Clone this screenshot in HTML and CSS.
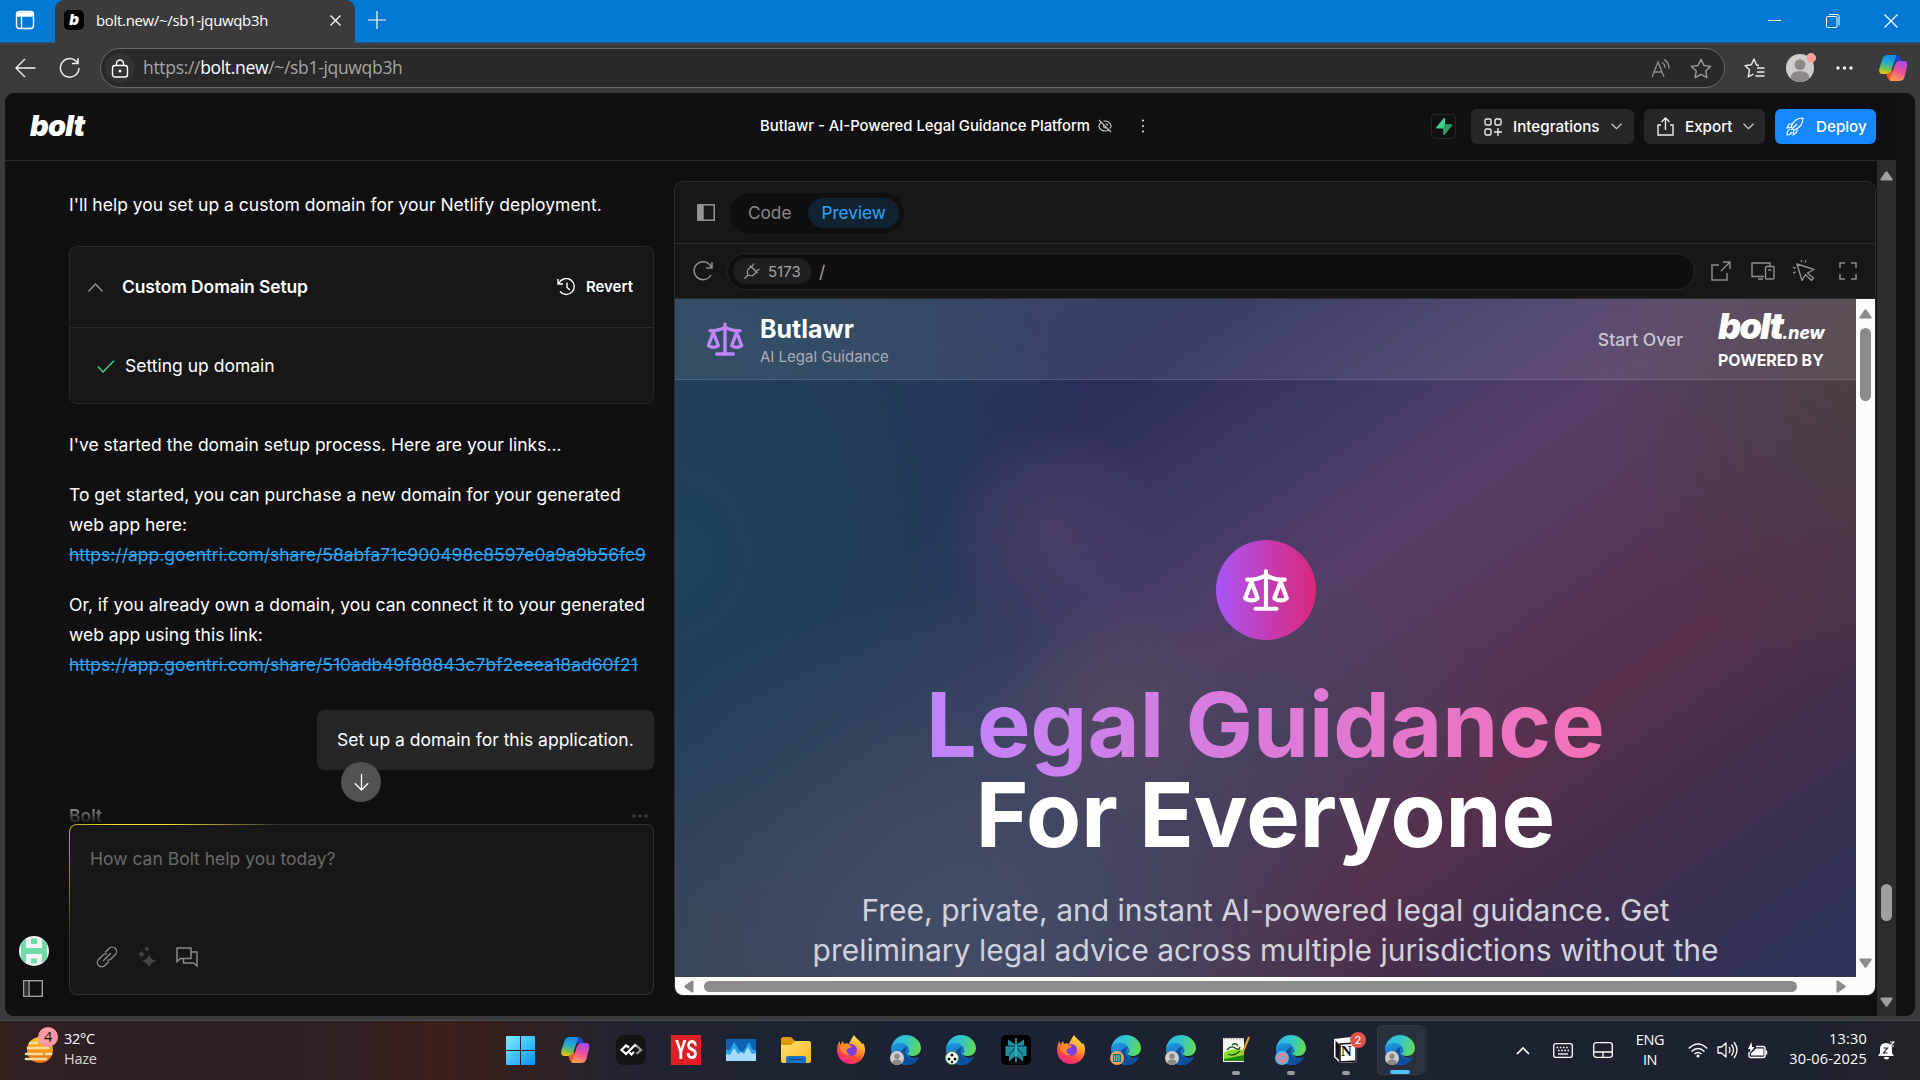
FILE: index.html
```html
<!DOCTYPE html>
<html lang="en">
<head>
    <meta charset="UTF-8">
    <meta name="viewport" content="width=device-width, initial-scale=1.0">
    <title>bolt.new/~/sb1-jquwqb3h</title>
    <link rel="stylesheet" href="styles.css">
</head>
<body>
    <!-- Shared icons -->
    <svg class="defs" width="0" height="0">
        <defs>
            <linearGradient id="edgeGreen" x1="0" y1="0.3" x2="1" y2="0.5">
                <stop offset="0" stop-color="#2fb4ee"/>
                <stop offset="0.5" stop-color="#35c6c8"/>
                <stop offset="1" stop-color="#62db53"/>
            </linearGradient>
            <linearGradient id="edgeBlue" x1="0" y1="0" x2="0.4" y2="1">
                <stop offset="0" stop-color="#1f9be6"/>
                <stop offset="1" stop-color="#1160ae"/>
            </linearGradient>
            <linearGradient id="foxBody" x1="0.8" y1="0" x2="0.3" y2="1">
                <stop offset="0" stop-color="#fff14a"/>
                <stop offset="0.4" stop-color="#ffa02c"/>
                <stop offset="0.7" stop-color="#ff4a3c"/>
                <stop offset="1" stop-color="#f0208c"/>
            </linearGradient>
            <linearGradient id="copA" x1="0.3" y1="0" x2="0.1" y2="1">
                <stop offset="0" stop-color="#1a8de8"/>
                <stop offset="0.4" stop-color="#24b0c8"/>
                <stop offset="0.7" stop-color="#7fc04c"/>
                <stop offset="1" stop-color="#ffc800"/>
            </linearGradient>
            <linearGradient id="copB" x1="0.7" y1="0" x2="0.4" y2="1">
                <stop offset="0" stop-color="#a04cf0"/>
                <stop offset="0.5" stop-color="#ee5098"/>
                <stop offset="1" stop-color="#ff9a54"/>
            </linearGradient>
            <linearGradient id="winG" x1="0" y1="0" x2="1" y2="1">
                <stop offset="0" stop-color="#7ff0ff"/>
                <stop offset="1" stop-color="#0a92f8"/>
            </linearGradient>
            <linearGradient id="folderG" x1="0" y1="0" x2="1" y2="1">
                <stop offset="0" stop-color="#ffe07a"/>
                <stop offset="1" stop-color="#f9b817"/>
            </linearGradient>
            <linearGradient id="sunG" x1="0" y1="0" x2="0" y2="1">
                <stop offset="0" stop-color="#ffc928"/>
                <stop offset="1" stop-color="#f06a0c"/>
            </linearGradient>
        </defs>
        <symbol id="edge" viewBox="0 0 30 30">
            <path fill="url(#edgeBlue)" d="M0 14c0-4 6-7 11-6 5 0 8 4 8 7-1 1-2 2-2 4 1 4 6 5 11 3-3 5-7 8-13 8C7 30 0 23 0 14z"/>
            <path fill="#0d4f9c" d="M10 17c1-3 4-5 7-5-2 2-3 4-2 7 2 5 8 6 13 3-2 5-7 8-11 8-5-1-9-7-7-13z"/>
            <path fill="url(#edgeGreen)" d="M0 14C1 6 7 0 15 0c8 0 15 6 15 13 0 5-4 8-8 8-3 0-6-1-5-3 1-1 2-2 1-4-1-4-5-6-9-6-4 0-8 2-9 6z"/>
        </symbol>
        <symbol id="person" viewBox="0 0 14 14">
            <circle cx="7" cy="7" r="7" fill="#cfcdcb"/>
            <circle cx="7" cy="5.3" r="2.7" fill="#8b8886"/>
            <path fill="#8b8886" d="M2.400 12.300c0-3 2-3.700 4.600-3.700s4.600.7 4.600 3.700A7 7 0 0 1 7 14a7 7 0 0 1-4.600-1.700z"/>
        </symbol>
        <symbol id="firefox" viewBox="0 0 30 30">
            <path fill="url(#foxBody)" d="M15 29C7 29 1 23 1 15c0-4 1-7 3-9v4l3-4 1 3c2-1 3-1 5 0 1-3 3-6 5-9 2 4 6 5 8 9l1-1c2 3 2 5 2 7 0 8-6 14-14 14z"/>
            <circle cx="15" cy="15" r="6" fill="#7b3fe0"/>
            <path fill="#ff8a26" d="M4 12c3-3 6-3 8-2l4 1c-1 2-3 2-5 3-1 2 0 5 4 6-6 1-11-3-11-8z"/>
        </symbol>
        <symbol id="copilot" viewBox="0 0 28 26">
            <path fill="#1c48c4" d="M14 0h3c3 0 4 2 5 6h-6l-4 4z"/>
            <path fill="url(#copA)" d="M8 0h7c2 0 2 1 1 3l-4 12c-1 3-2 4-5 4H3c-3 0-4-3-3-6L3 4c1-3 3-4 5-4z"/>
            <path fill="#f25a2c" d="M6 19c3 0 5-1 6-4l1 0-1 11c-3 0-4-3-5-7z"/>
            <path fill="url(#copB)" d="M20 26h-8c-2 0-2-1-1-3l4-12c1-3 2-5 5-5h5c3 0 3 3 2.500 6L25 22c-1 3-3 4-5 4z"/>
        </symbol>
        <symbol id="scales" viewBox="0 0 24 24">
            <g fill="none" stroke="currentColor" stroke-width="2" stroke-linecap="round" stroke-linejoin="round">
                <path d="m16 16 3-8 3 8c-.87.65-1.920 1-3 1s-2.130-.35-3-1Z"/>
                <path d="m2 16 3-8 3 8c-.87.65-1.920 1-3 1s-2.130-.35-3-1Z"/>
                <path d="M7 21h10M12 3v18M3 7h2c2 0 5-1 7-2 2 1 5 2 7 2h2"/>
            </g>
        </symbol>
    </svg>

    <div class="titlebar">
        <svg class="workspaces" width="20" height="20" viewBox="0 0 20 20" fill="none" stroke="#fff" stroke-width="1.400"><rect x="1.500" y="1.500" width="17" height="17" rx="3"/><path d="M2 3h16v3H2z" fill="#fff"/><path d="M6.500 6v12"/></svg>
        <div class="tab">
            <span class="favicon">b</span>
            <span class="tab-title">bolt.new/~/sb1-jquwqb3h</span>
            <svg width="11" height="11" viewBox="0 0 11 11" stroke="#fff" stroke-width="1.300"><path d="M.5.5l10 10M10.500.5l-10 10"/></svg>
        </div>
        <svg class="new-tab" width="18" height="18" viewBox="0 0 18 18" stroke="#fff" stroke-width="1.200"><path d="M9 0v18M0 9h18"/></svg>
        <div class="window-buttons">
            <svg width="14" height="14" viewBox="0 0 14 14" stroke="#fff"><path d="M0 6.500h13"/></svg>
            <svg width="14" height="14" viewBox="0 0 14 14" fill="none" stroke="#fff"><rect x=".5" y="2.500" width="10.500" height="11" rx="1"/><path d="M3 .5h8q2 0 2 2v9"/></svg>
            <svg width="14" height="14" viewBox="0 0 14 14" stroke="#fff" stroke-width="1.200"><path d="M.5.5l13 13M13.500.5l-13 13"/></svg>
        </div>
    </div>

    <div class="toolbar">
        <svg width="21" height="20" viewBox="0 0 21 20" fill="none" stroke="#f0f0f0" stroke-width="1.400"><path d="M20.500 10H1M10 1l-9 9 9 9"/></svg>
        <svg class="reload" width="22" height="22" viewBox="0 0 22 22" fill="none" stroke="#f0f0f0" stroke-width="1.500"><path d="M20 11a9.300 9.300 0 1 1-3-7l2 2M19 1v5.500h-6"/></svg>
        <div class="address">
            <span class="lock"><svg width="18" height="19" viewBox="0 0 18 19" fill="none" stroke="#fff" stroke-width="1.400"><rect x="1.500" y="6.500" width="15" height="11.500" rx="2.500"/><path d="M5.500 6V4.500a3.500 3.500 0 0 1 7 0V6"/><circle cx="9" cy="12" r=".8" fill="#fff"/></svg></span>
            <span class="url">https://<b>bolt.new</b>/~/sb1-jquwqb3h</span>
            <svg class="aloud" width="20" height="19" viewBox="0 0 20 19" fill="none" stroke="#8f8f8f" stroke-width="1.300"><path d="M1 18L7 3l6 15M3 13h8M11 3.500q3 1.500 3 5.500M13 .7q5 2.500 5 9"/></svg>
            <svg width="22" height="21" viewBox="0 0 24 23" fill="none" stroke="#9a9a9a" stroke-width="1.500" stroke-linejoin="round"><path d="M12 1.500l3.200 6.700 7.300 1-5.300 5.100 1.300 7.300L12 18l-6.500 3.600 1.300-7.300L1.500 9.200l7.300-1z"/></svg>
        </div>
        <svg class="favs" width="21" height="20" viewBox="0 0 21 20" fill="none" stroke="#f0f0f0" stroke-width="1.400" stroke-linejoin="round"><path d="M15 7.500l-2.500-.5L10 1 7.300 6.800 1 7.600l4.500 4.400L4.300 18.800 9.500 16"/><path d="M13 10h7.500M13 14h7.500M11.500 18h9"/></svg>
        <div class="profile"><svg width="28" height="28"><use href="#person"/></svg><i></i></div>
        <svg class="more" width="17" height="4" viewBox="0 0 17 4" fill="#f0f0f0"><circle cx="2" cy="2" r="1.700"/><circle cx="8.500" cy="2" r="1.700"/><circle cx="15" cy="2" r="1.700"/></svg>
        <svg class="cop" width="29" height="26"><use href="#copilot"/></svg>
    </div>

    <div class="viewport">
        <div class="app">
            <div class="app-main">
                <header class="app-header">
                    <div class="logo">bolt</div>
                    <div class="project">
                        <span>Butlawr - AI-Powered Legal Guidance Platform</span>
                        <svg width="14" height="14" viewBox="0 0 14 14" fill="none" stroke="#c8c8c8" stroke-width="1.100"><path d="M1 1l12 12M3.500 3Q1.500 4.600.8 7q1.700 5 6.200 5 2 0 3.600-1M5.500 2.100Q6.200 2 7 2q4.500 0 6.200 5-.5 1.400-1.400 2.500M5.500 6.500A1.800 1.800 0 0 0 8 8.700M7.500 4.700a2 2 0 0 1 2 2"/></svg>
                        <svg class="dots" width="4" height="14" viewBox="0 0 4 14" fill="#ddd"><circle cx="2" cy="1.500" r="1.100"/><circle cx="2" cy="7" r="1.100"/><circle cx="2" cy="12.500" r="1.100"/></svg>
                    </div>
                    <div class="actions">
                        <div class="supabase"><svg width="16" height="17" viewBox="0 0 16 17"><path fill="#3ecf8e" d="M9 .3v6.200h6.200c.8 0 .9.700.5 1.200L8.700 16.500C8 17 7.500 16.800 7.500 16V10.500H1C0 10.500-.1 9.700.3 9.200L7.600.2C8-.2 9-.1 9 .3z"/><path fill="#2a9d68" d="M9 6.500h6.200c.8 0 .9.700.5 1.200L8.700 16.500C8 17 7.500 16.800 7.500 16V10.500z"/></svg></div>
                        <button class="btn integrations">
                            <svg width="18" height="18" viewBox="0 0 18 18" fill="none" stroke="#eee" stroke-width="1.400"><rect x="1" y="1" width="6" height="6" rx="1.500"/><rect x="11" y="1" width="6" height="6" rx="1.500"/><rect x="1" y="11" width="6" height="6" rx="1.500"/><path d="M14 10v8M10 14h8"/></svg>
                            Integrations
                            <svg class="chev" width="11" height="7" viewBox="0 0 11 7" fill="none" stroke="#ccc" stroke-width="1.300"><path d="M.5.7l5 5 5-5"/></svg>
                        </button>
                        <button class="btn export">
                            <svg width="17" height="19" viewBox="0 0 17 19" fill="none" stroke="#eee" stroke-width="1.400"><path d="M4 8H1v10h15V8h-3M8.500 13V1M4.500 5l4-4 4 4"/></svg>
                            Export
                            <svg class="chev" width="11" height="7" viewBox="0 0 11 7" fill="none" stroke="#ccc" stroke-width="1.300"><path d="M.5.7l5 5 5-5"/></svg>
                        </button>
                        <button class="btn deploy">
                            <svg width="18" height="19" viewBox="0 0 18 19" fill="none" stroke="#fff" stroke-width="1.200" stroke-linejoin="round"><path d="M5 10C7 4 11 1 17 1c0 6-3 10-9 12zM6 7H3L1 11l4-1M11 12v3l-4 3 1-5M4 12c-2 1-3 3-3 6 3 0 4-1 5-3M5 13l6-6"/></svg>
                            Deploy
                        </button>
                    </div>
                </header>

                <div class="workbench">
                    <aside class="rail">
                        <svg width="30" height="30" viewBox="0 0 30 30"><circle cx="15" cy="15" r="15" fill="#f2f2f2"/><path fill="#6edcaa" d="M2 8q2-3 5-5v9h16V3q3 2 5 5v14q-2 3-5 5v-9H7v9q-3-2-5-5zM12 2.500h6v5.500h-6zM12 22.500h6v5h-6z"/></svg>
                        <svg width="20" height="17" viewBox="0 0 20 17" fill="none" stroke="#a0a0a0" stroke-width="1.400"><rect x=".7" y=".7" width="18.600" height="15.600"/><path d="M6 1v15"/><path stroke="#333" stroke-width="3" d="M3.200 1.500v14"/></svg>
                    </aside>

                    <section class="chat">
                        <div class="messages">
                            <p>I'll help you set up a custom domain for your Netlify deployment.</p>
                            <div class="artifact">
                                <div class="artifact-head">
                                    <svg width="15" height="9" viewBox="0 0 15 9" fill="none" stroke="#999" stroke-width="1.200"><path d="M.5 8.500l7-7.500 7 7.500"/></svg>
                                    <strong>Custom Domain Setup</strong>
                                    <span class="revert">
                                        <svg width="19" height="18" viewBox="0 0 19 18" fill="none" stroke="#fff" stroke-width="1.400"><path d="M2 5A8 8 0 1 1 3 13.500M1 1v5h5M10 4.500V9.500l3 2.500"/></svg>
                                        Revert
                                    </span>
                                </div>
                                <div class="artifact-body">
                                    <svg width="18" height="13" viewBox="0 0 18 13" fill="none" stroke="#3fd07a" stroke-width="1.500"><path d="M1 6.500l5 5.500L17 .7"/></svg>
                                    Setting up domain
                                </div>
                            </div>
                            <p>I've started the domain setup process. Here are your links...</p>
                            <p>To get started, you can purchase a new domain for your generated<br>web app here:<br><a href="#">https://app.goentri.com/share/58abfa71c900498c8597e0a9a9b56fc9</a></p>
                            <p>Or, if you already own a domain, you can connect it to your generated<br>web app using this link:<br><a href="#">https://app.goentri.com/share/510adb49f88843c7bf2eeea18ad60f21</a></p>
                            <div class="bubble">Set up a domain for this application.</div>
                            <div class="author"><span>Bolt</span><svg width="16" height="4" viewBox="0 0 16 4" fill="#3c3c3c"><circle cx="2" cy="2" r="1.800"/><circle cx="8" cy="2" r="1.800"/><circle cx="14" cy="2" r="1.800"/></svg></div>
                        </div>
                        <button class="scroll-down"><svg width="15" height="17" viewBox="0 0 15 17" fill="none" stroke="#fff" stroke-width="1.300"><path d="M7.500 0v16M.8 9.300l6.700 6.700 6.700-6.700"/></svg></button>
                        <div class="prompt">
                            <span class="placeholder">How can Bolt help you today?</span>
                            <div class="prompt-tools">
                                <svg width="22" height="22" viewBox="0 0 22 22" fill="none" stroke="#8a8a8a" stroke-width="1.400" stroke-linecap="round"><path d="M9.500 6l3.600-3.600a4.300 4.300 0 0 1 6.200 6.200L15 12.900a4.300 4.300 0 0 1-3.500 1.200M12.500 16l-3.600 3.600a4.300 4.300 0 0 1-6.200-6.200L7 9.100a4.300 4.300 0 0 1 3.500-1.200M7.500 14.500l7-7"/></svg>
                                <svg width="20" height="22" viewBox="0 0 20 22" fill="#444"><path d="M12 8q1 5.500 7.500 7Q13 16.500 12 22q-1-5.500-7.500-7Q11 13.500 12 8zM4.500 4q.5 3 4 4-3.500 1-4 4-.5-3-4-4 3.500-1 4-4zM10 0q.3 2 3 3-2.700 1-3 3-.3-2-3-3 2.700-1 3-3z"/></svg>
                                <svg width="22" height="20" viewBox="0 0 22 20" fill="none" stroke="#8a8a8a" stroke-width="1.500"><path d="M1 1h14v10.500H4.500L1 14.500zM15 5h6v14l-3.500-3H7.500v-4.500"/></svg>
                            </div>
                        </div>
                    </section>

                    <section class="panel">
                        <div class="panel-tabs">
                            <svg width="18" height="17" viewBox="0 0 18 17" fill="none" stroke="#949494" stroke-width="1.500"><rect x=".8" y=".8" width="16.400" height="15.400"/><path d="M1 1h5v15H1z" fill="#949494"/></svg>
                            <div class="switch"><span>Code</span><span class="active">Preview</span></div>
                        </div>
                        <div class="panel-address">
                            <svg width="21" height="20" viewBox="0 0 21 20" fill="none" stroke="#8f8f8f" stroke-width="1.500"><path d="M19 14a9 9 0 1 1 .5-7.500M20 1v6h-6"/></svg>
                            <div class="path">
                                <span class="port"><svg width="16" height="16" viewBox="0 0 16 16" fill="none" stroke="#a0a0a0" stroke-width="1.200"><path d="M.5 15.500l3.500-3.500M10 .5L8 3.500M15.500 6L12.500 8M6 2.500l7.500 7.500M7 3.500L4 6.500Q2.500 9 4 12q3 1.500 5.500 0l3-3"/></svg>5173</span>
                                <span class="slash">/</span>
                            </div>
                            <div class="panel-icons">
                                <svg width="20" height="20" viewBox="0 0 20 20" fill="none" stroke="#8f8f8f" stroke-width="1.400"><path d="M8 4H1v15h15v-7M12 1h7v7M19 1l-9 9"/></svg>
                                <svg class="devices" width="24" height="18" viewBox="0 0 24 18" fill="none" stroke="#8f8f8f" stroke-width="1.400"><path d="M13 14.500H1V1h18v3M7 17h5"/><rect x="14.500" y="4.500" width="8.500" height="12.500" rx="1"/><path d="M17 8h3.500"/></svg>
                                <svg class="inspect" width="22" height="22" viewBox="0 0 22 22" fill="none" stroke="#8f8f8f" stroke-width="1.400" stroke-linejoin="round"><path d="M4 4l17 5.500-6.500 3.500 6 5-2 2.500-6-6-3.500 6zM8.500 2V0M12 2.500l1-2.200M0 7.500l2.500.5M0 13l2.500-1"/></svg>
                                <svg class="expand" width="18" height="18" viewBox="0 0 18 18" fill="none" stroke="#8f8f8f" stroke-width="1.500"><path d="M1 6V1h5M12 1h5v5M17 12v5h-5M6 17H1v-5"/></svg>
                            </div>
                        </div>
                        <div class="preview">
                            <div class="site">
                                <nav class="site-nav">
                                    <svg class="brand-icon" width="40" height="40"><use href="#scales"/></svg>
                                    <div class="brand">
                                        <div class="brand-name">Butlawr</div>
                                        <div class="brand-sub">AI Legal Guidance</div>
                                    </div>
                                    <span class="start-over">Start Over</span>
                                    <div class="powered">
                                        <div class="powered-logo"><b>bolt</b><i>.new</i></div>
                                        <div class="powered-by">POWERED BY</div>
                                    </div>
                                </nav>
                                <main class="hero">
                                    <div class="hero-icon"><svg width="50" height="50"><use href="#scales"/></svg></div>
                                    <h1><span>Legal Guidance</span><br>For Everyone</h1>
                                    <p>Free, private, and instant AI-powered legal guidance. Get<br>preliminary legal advice across multiple jurisdictions without the</p>
                                </main>
                            </div>
                            <div class="vbar">
                                <svg width="13" height="10" viewBox="0 0 13 10"><path fill="#8b8b8b" d="M5.500.8q1-1 2 0L12.500 8q.5 1.500-1 1.500h-10Q0 9.500.5 8z"/></svg>
                                <div class="thumb"></div>
                                <svg width="13" height="10" viewBox="0 0 13 10"><path fill="#8b8b8b" d="M5.500 9.200q1 1 2 0L12.500 2q.5-1.500-1-1.500h-10Q0 .5.500 2z"/></svg>
                            </div>
                            <div class="hbar">
                                <svg width="10" height="13" viewBox="0 0 10 13"><path fill="#8b8b8b" d="M.8 5.500q-1 1 0 2L8 12.500q1.500.5 1.500-1v-10Q9.500 0 8 .5z"/></svg>
                                <div class="thumb"></div>
                                <svg width="10" height="13" viewBox="0 0 10 13"><path fill="#8b8b8b" d="M9.200 5.500q1 1 0 2L2 12.500Q.5 13 .5 11.500v-10Q.5 0 2 .5z"/></svg>
                            </div>
                        </div>
                    </section>

                    <div class="page-scroll">
                        <svg width="13" height="10" viewBox="0 0 13 10"><path fill="#9f9f9f" d="M5.500.8q1-1 2 0L12.500 8q.5 1.500-1 1.500h-10Q0 9.500.5 8z"/></svg>
                        <div class="thumb"></div>
                        <svg width="13" height="10" viewBox="0 0 13 10"><path fill="#9f9f9f" d="M5.500 9.200q1 1 2 0L12.500 2q.5-1.500-1-1.500h-10Q0 .5.500 2z"/></svg>
                    </div>
                </div>
            </div>
        </div>
    </div>

    <div class="taskbar">
        <div class="weather">
            <div class="weather-icon">
                <svg width="30" height="28" viewBox="0 0 30 28"><circle cx="16" cy="14" r="13" fill="url(#sunG)"/><path stroke="#f5dca0" stroke-width="2.600" stroke-linecap="round" d="M6 7h7M4 12h20M2 18h16M22 18h5M2 23h20"/></svg>
                <span class="count">4</span>
            </div>
            <div class="weather-text">32°C<br><span>Haze</span></div>
        </div>
        <div class="apps">
            <div class="task"><svg width="29" height="29" viewBox="0 0 29 29"><path fill="url(#winG)" d="M0 1q0-1 1-1h13v14H0zM15 0h13q1 0 1 1v13H15zM0 15h14v14H1q-1 0-1-1zM15 15h14v13q0 1-1 1H15z"/></svg></div>
            <div class="task"><svg width="29" height="26"><use href="#copilot"/></svg></div>
            <div class="task"><svg width="30" height="30" viewBox="0 0 30 30" fill="none" stroke-width="2.200"><rect width="30" height="30" rx="8" fill="#141517"/><path stroke="#fff" d="M13 12.500L10 10.500 5.500 15l4.500 4 9-9 2 1.500M13.500 17.500l2 2 2.500-2.500"/><path stroke="#999" d="M20.500 10.500l4.500 4.500-4.500 4"/></svg></div>
            <div class="task"><span class="ys"><span>YS</span></span></div>
            <div class="task"><svg width="30" height="22" viewBox="0 0 30 22"><rect width="30" height="22" rx="1" fill="#0f62b4"/><path fill="#27a3e8" d="M0 11h4l4-8 6 9 3 1 6-10 4 8h3v11H0z"/><path fill="#a9dcfb" d="M0 15l4 1 4-7 4 6 3-2 3 2 4-7 4 7 4-1v8H0z"/></svg></div>
            <div class="task"><svg width="30" height="27" viewBox="0 0 30 27"><path fill="#dd9a08" d="M0 2q0-2 2-2h8l4 4h14v6H0z"/><path fill="url(#folderG)" d="M0 8h10l4-4h14q2 0 2 2v18q0 2-2 2H2q-2 0-2-2z"/><path fill="#1272c4" d="M5 21q0-2 2-2h16q2 0 2 2v5H5z"/><path stroke="#0a4d92" stroke-width="1.300" d="M8 22.500h14"/></svg></div>
            <div class="task"><svg width="30" height="30"><use href="#firefox"/></svg></div>
            <div class="task"><svg width="30" height="30"><use href="#edge"/></svg><svg class="mini" width="14" height="14"><use href="#person"/></svg></div>
            <div class="task"><svg width="30" height="30"><use href="#edge"/></svg><svg class="mini" width="14" height="14" viewBox="0 0 14 14"><circle cx="7" cy="7" r="6.500" fill="#fff" stroke="#3c9a4c"/><g fill="#111"><circle cx="7" cy="4" r="1.500"/><circle cx="4" cy="8" r="1.500"/><circle cx="10" cy="8" r="1.500"/><circle cx="7" cy="11" r="1.200"/></g></svg></div>
            <div class="task"><svg width="30" height="30" viewBox="0 0 30 30"><rect width="30" height="30" rx="5" fill="#020202"/><path fill="#1d8f9f" d="M15 10L7 4.500V11H4.500v10H8v5.500l7-6 7 6V21h3.500V11H23V4.500z"/><path stroke="#06343a" stroke-width="1" fill="none" d="M15 12l-7 8M15 12l7 8M7 11h16"/><path stroke="#35c6d4" stroke-width="1.300" d="M15 3v24"/></svg></div>
            <div class="task"><svg width="30" height="30"><use href="#firefox"/></svg></div>
            <div class="task"><svg width="30" height="30"><use href="#edge"/></svg><svg class="mini" width="14" height="14" viewBox="0 0 14 14"><circle cx="7" cy="7" r="7" fill="#f2a35c"/><rect x="3" y="3" width="8" height="8" fill="#0f7470"/><path stroke="#fff" stroke-dasharray="1.200 1" d="M4 5h6M4 7h6M4 9h6"/></svg></div>
            <div class="task"><svg width="30" height="30"><use href="#edge"/></svg><svg class="mini" width="14" height="14"><use href="#person"/></svg></div>
            <div class="task running"><svg width="28" height="28" viewBox="0 0 28 28"><path fill="#f4f4f0" d="M1 2h21v24H1z"/><path fill="#8fdc2c" d="M2 16q10-4 20-2v11H2z"/><path fill="#1f8a14" d="M2 23l20-4v6H2z"/><path fill="none" stroke="#20501c" stroke-width="1.400" d="M5 14q4-5 8-2t5-1M6 18q5 3 12-3M10 9q4-3 6 1"/><path stroke="#999" stroke-width="1.500" stroke-dasharray="1.500 1.500" d="M2 2.500h20"/><path stroke="#e6a224" stroke-width="2" d="M27 1l-7 17"/></svg></div>
            <div class="task running"><svg width="30" height="30"><use href="#edge"/></svg><svg class="mini" width="14" height="14" viewBox="0 0 14 14"><circle cx="7" cy="7" r="7" fill="#4cc3e4"/><circle cx="7" cy="7" r="3.600" fill="none" stroke="#ee7f9c" stroke-width="3.200"/></svg></div>
            <div class="task running"><svg width="26" height="28" viewBox="0 0 26 28"><path fill="#fff" d="M1 3l17-2 6 4v21L7 27l-6-6z"/><path fill="#111" d="M2.500 4.500l4 4v16l-4-4z"/><path fill="#fff" stroke="#111" stroke-width="1.500" d="M7 8l16-1v18L7 26z"/></svg><span class="notion-n">N</span><span class="notion-count">2</span></div>
            <div class="task active"><svg width="30" height="30"><use href="#edge"/></svg><svg class="mini" width="14" height="14"><use href="#person"/></svg></div>
        </div>
        <div class="tray">
            <svg class="t-up" width="14" height="9" viewBox="0 0 14 9" fill="none" stroke="#fff" stroke-width="1.700"><path d="M1 8l6-6 6 6"/></svg>
            <svg class="t-kb" width="20" height="15" viewBox="0 0 20 15" fill="none" stroke="#fff" stroke-width="1.300"><rect x=".7" y=".7" width="18.600" height="13.600" rx="2"/><path stroke-width="1.600" stroke-dasharray="1.600 1.600" d="M3.500 4.500h13M5 7.500h11"/><path d="M5 11h10"/></svg>
            <svg class="t-pad" width="20" height="16" viewBox="0 0 20 16" fill="none" stroke="#fff" stroke-width="1.300"><rect x=".7" y=".7" width="18.600" height="14.600" rx="2.500"/><path d="M1 10h18M10 10v5"/></svg>
            <div class="lang">ENG<br>IN</div>
            <svg class="t-wifi" width="20" height="15" viewBox="0 0 20 15" fill="none" stroke="#fff" stroke-width="1.400"><path d="M.7 5.500q9.300-9 18.600 0M3.500 8.500q6.500-6 13 0M6.500 11q3.500-3 7 0"/><circle cx="10" cy="13" r="1.500" fill="#fff" stroke="none"/></svg>
            <svg class="t-vol" width="21" height="18" viewBox="0 0 21 18" fill="none" stroke="#fff" stroke-width="1.300" stroke-linejoin="round"><path d="M1 6h3.500L9 2v14l-4.500-4H1zM12 6q2 3 0 6M14.500 3.500q4 5.500 0 11M17 1q6 8 0 16"/></svg>
            <svg class="t-bat" width="20" height="17" viewBox="0 0 20 17" fill="none" stroke="#fff" stroke-width="1.400"><path d="M8 4.500h7q2 0 2 2v7q0 2-2 2H3q-2 0-2-2V10M18.500 8.500v4"/><path fill="#fff" stroke="none" d="M8 6.500h7.500v7H3v-2zM3.500 0L0 7h2.500L2 11l4.500-6H4z"/></svg>
            <div class="clock">13:30<br>30-06-2025</div>
            <svg class="t-bell" width="17" height="19" viewBox="0 0 17 19"><path fill="#fff" d="M8 2q-6 0-6 6v4l-2 3h16l-2-3V8q0-6-6-6zM6 16h5q0 2.500-2.500 2.500T6 16z"/><path fill="none" stroke="#1c2230" stroke-width="1.200" d="M5.500 7h4l-4 5h4"/><path fill="none" stroke="#fff" stroke-width="1.100" d="M12 1h4l-4 4h4"/></svg>
        </div>
    </div>
</body>
</html>
```
FILE: styles.css
```css
* {
    box-sizing: border-box;
}

body {
    margin: 0;
    width: 1920px;
    height: 1080px;
    overflow: hidden;
    display: flex;
    flex-direction: column;
    background: #3b3b3b;
    color: #fff;
    font-family: Inter, "Liberation Sans", sans-serif;
}

svg {
    display: block;
    flex: none;
}

.defs {
    position: absolute;
}

/* Browser chrome */
.titlebar {
    height: 43px;
    flex: none;
    display: flex;
    align-items: center;
    background: #0078d4;
    border-bottom: 1px solid #1d5f96;
    font-family: "Open Sans", sans-serif;
}

.workspaces {
    margin: 0 30px 2px 15px;
}

.tab {
    width: 300px;
    height: 43px;
    margin-left: -10px;
    margin-bottom: -1px;
    padding: 0 14px 3px 9px;
    display: flex;
    align-items: center;
    background: #3b3b3b;
    border-radius: 9px 9px 0 0;
}

.favicon {
    width: 20px;
    height: 20px;
    border-radius: 5px;
    background: #000;
    font: italic 900 15px/19px Inter, sans-serif;
    text-align: center;
}

.tab-title {
    flex: 1;
    margin-left: 12px;
    padding-bottom: 1px;
    font-size: 14.9px;
    letter-spacing: -0.28px;
}

.new-tab {
    margin: 0 0 3px 13px;
}

.window-buttons {
    margin-left: auto;
    padding-right: 22px;
    display: flex;
    gap: 44px;
}

.toolbar {
    height: 50px;
    flex: none;
    display: flex;
    align-items: center;
    padding: 0 12px 0 15px;
    font-family: "Open Sans", sans-serif;
}

.reload {
    margin-left: 23px;
}

.address {
    width: 1625px;
    height: 40px;
    margin-left: 19px;
    padding: 0 12px 0 4px;
    display: flex;
    align-items: center;
    border: 1px solid #6a6a6a;
    border-radius: 20px;
    background: #292929;
}

.lock {
    width: 30px;
    height: 30px;
    display: flex;
    align-items: center;
    justify-content: center;
    border-radius: 50%;
    background: #333;
}

.url {
    margin-left: 8px;
    padding-bottom: 2px;
    color: #a5a5a5;
    font-size: 17.5px;
    letter-spacing: -0.32px;
}

.url b {
    color: #fff;
    font-weight: 400;
}

.aloud {
    margin-left: auto;
    margin-right: 19px;
}

.favs {
    margin-left: 19px;
}

.profile {
    position: relative;
    margin-left: 21px;
}

.profile i {
    position: absolute;
    top: -1px;
    right: -2px;
    width: 10px;
    height: 10px;
    border-radius: 50%;
    background: #ff9b97;
    border: 1px solid #eab6b4;
}

.more {
    margin-left: 22px;
}

.cop {
    margin-left: 26px;
}

/* Bolt app */
.viewport {
    flex: none;
    height: 927px;
    padding: 0 5px 4px;
}

.app {
    height: 923px;
    padding-right: 19px;
    background: #121212;
    border-radius: 9px;
    overflow: hidden;
}

.app-main {
    height: 100%;
    background: #101010;
    display: flex;
    flex-direction: column;
}

.app-header {
    height: 68px;
    flex: none;
    display: grid;
    grid-template-columns: 755px 1fr auto;
    align-items: center;
    padding-right: 20px;
    border-bottom: 1px solid #2b2b2b;
}

.logo {
    padding: 0 0 3px 25px;
    font-size: 29px;
    font-weight: 900;
    font-style: italic;
    letter-spacing: -0.8px;
}

.project {
    display: flex;
    align-items: center;
    padding-bottom: 1px;
    font-size: 14.85px;
    font-weight: 500;
}

.project svg {
    margin-left: 8px;
}

.project .dots {
    margin-left: 29px;
}

.actions {
    display: flex;
    align-items: center;
    gap: 10px;
}

.supabase {
    width: 25px;
    height: 25px;
    margin-right: 5px;
    display: flex;
    align-items: center;
    justify-content: center;
    border: 1px solid #272727;
    border-radius: 4px;
}

.btn {
    height: 35px;
    padding: 0 13px;
    display: flex;
    align-items: center;
    border: none;
    border-radius: 6px;
    background: #272727;
    color: #fff;
    font: 500 15.2px Inter, sans-serif;
    white-space: nowrap;
}

.integrations {
    width: 163px;
    gap: 11px;
}

.export {
    width: 121px;
    gap: 11px;
}

.deploy {
    width: 101px;
    padding: 0 11px;
    gap: 12px;
    background: #1488fc;
}

.chev {
    margin-left: auto;
}

.workbench {
    flex: 1;
    display: flex;
    min-height: 0;
}

.rail {
    width: 64px;
    padding: 0 0 19px 14px;
    display: flex;
    flex-direction: column;
    justify-content: flex-end;
    gap: 14px;
}

.rail svg + svg {
    margin-left: 4px;
}

.chat {
    position: relative;
    width: 585px;
    display: flex;
    flex-direction: column;
    font-size: 17.5px;
    line-height: 30px;
    white-space: nowrap;
}

.messages {
    height: 663px;
    padding-top: 29px;
    overflow: hidden;
}

.messages p {
    margin: 0 0 20px;
}

.messages a {
    color: #2ba6ff;
    text-decoration: line-through;
}

.artifact {
    height: 158px;
    margin: 26px 0 26px;
    border: 1px solid #2a2a2a;
    border-radius: 8px;
    background: #171717;
}

.artifact-head {
    height: 81px;
    padding: 0 20px 0 18px;
    display: flex;
    align-items: center;
    border-bottom: 1px solid #2a2a2a;
}

.artifact-head strong {
    margin-left: 19px;
    font-size: 17.4px;
    font-weight: 600;
    letter-spacing: -0.07px;
}

.revert {
    margin-left: auto;
    display: flex;
    align-items: center;
    gap: 10px;
    font-size: 15px;
    font-weight: 600;
}

.artifact-body {
    height: 76px;
    padding-left: 27px;
    display: flex;
    align-items: center;
    gap: 10px;
}

.bubble {
    width: 337px;
    margin: 30px 0 31px auto;
    padding: 15px 20px;
    border-radius: 7px;
    background: #262626;
}

.author {
    display: flex;
    justify-content: space-between;
    align-items: center;
    padding-right: 6px;
    font-weight: 600;
}

.author span {
    color: transparent;
    background: linear-gradient(#9a9a9a 20%, #151515 75%);
    -webkit-background-clip: text;
    background-clip: text;
}

.scroll-down {
    position: absolute;
    left: 272px;
    top: 601px;
    width: 40px;
    height: 40px;
    padding: 0;
    display: flex;
    align-items: center;
    justify-content: center;
    border: none;
    border-radius: 50%;
    background: #525252;
}

.prompt {
    height: 171px;
    padding: 19px 20px 26px;
    display: flex;
    flex-direction: column;
    justify-content: space-between;
    border: 1px solid transparent;
    border-radius: 8px;
    background:
        linear-gradient(#171717, #171717) padding-box,
        radial-gradient(ellipse 140px 130px at 70px 0, #f6e02c, #f6e02c 20%, #333 100%) border-box;
}

.placeholder {
    color: #6a6a6a;
}

.prompt-tools {
    display: flex;
    align-items: center;
    gap: 19px;
    padding-left: 6px;
}

/* Preview panel */
.panel {
    width: 1202px;
    height: 815px;
    margin: 20px 1px 0 20px;
    display: flex;
    flex-direction: column;
    border: 1px solid #2d2d2d;
    border-radius: 9px;
    background: #171717;
    overflow: hidden;
}

.panel-tabs {
    height: 62px;
    flex: none;
    display: flex;
    align-items: center;
    padding-left: 22px;
    border-bottom: 1px solid #2d2d2d;
}

.switch {
    height: 40px;
    margin-left: 15px;
    padding: 5px;
    display: flex;
    gap: 4px;
    border-radius: 20px;
    background: #0f0f0f;
    color: #8b8b8b;
    font-size: 17.2px;
    line-height: 30px;
}

.switch span {
    padding: 0 13px;
    border-radius: 15px;
}

.switch .active {
    background: #122232;
    color: #2ba6ff;
}

.panel-address {
    height: 55px;
    flex: none;
    display: flex;
    align-items: center;
    padding: 0 18px 0 17px;
    border-bottom: 1px solid #2d2d2d;
}

.path {
    width: 968px;
    height: 37px;
    margin-left: 14px;
    padding-left: 5px;
    display: flex;
    align-items: center;
    gap: 8px;
    border: 1px solid #272727;
    border-radius: 19px;
    background: #0f0f0f;
}

.port {
    width: 78px;
    height: 26px;
    padding-left: 11px;
    display: flex;
    align-items: center;
    gap: 8px;
    border-radius: 13px;
    background: #1f1f1f;
    color: #a3a3a3;
    font-size: 15px;
}

.slash {
    color: #a3a3a3;
    font-size: 17.5px;
}

.panel-icons {
    margin-left: auto;
    display: flex;
    align-items: center;
}

.devices {
    margin-left: 20px;
}

.inspect {
    margin-left: 18px;
}

.expand {
    margin-left: 24px;
}

.preview {
    flex: 1;
    min-height: 0;
    display: grid;
    grid-template: 678px 18px / 1181px 19px;
    background: #fcfcfc;
}

.site {
    overflow: hidden;
    background:
        radial-gradient(circle 110px at 375px 230px, rgba(92, 66, 108, 0.5), rgba(88, 66, 108, 0.35) 50%, transparent),
        radial-gradient(circle 120px at 445px 415px, rgba(88, 74, 90, 0.55), transparent),
        radial-gradient(ellipse 230px 170px at 600px 430px, rgba(62, 70, 94, 0.6), transparent),
        radial-gradient(ellipse 280px 330px at 1200px 60px, rgba(72, 66, 64, 0.95), transparent),
        radial-gradient(ellipse 420px 330px at 290px 620px, rgba(64, 78, 104, 0.95), rgba(60, 74, 98, 0.7) 45%, transparent),
        radial-gradient(ellipse 300px 200px at 0 678px, rgba(48, 70, 78, 0.8), transparent),
        radial-gradient(ellipse 440px 480px at 0 260px, #1f4358, rgba(33, 64, 88, 0.85) 45%, transparent),
        linear-gradient(145deg, #243c5a 0%, #2a2f58 26%, #433c66 40%, #563d67 49%, #56304d 70%, #442f4d 80%, #2e3357 96%);
}

.site-nav {
    height: 81px;
    padding: 0 30px;
    display: flex;
    align-items: center;
    background: rgba(255, 255, 255, 0.08);
    border-bottom: 1px solid rgba(255, 255, 255, 0.13);
}

.brand-icon {
    color: #c084fc;
}

.brand {
    margin-left: 15px;
}

.brand-name {
    font-size: 25px;
    font-weight: 700;
    line-height: 35px;
}

.brand-sub {
    color: #a9abb9;
    font-size: 15px;
    line-height: 20px;
}

.start-over {
    margin-left: auto;
    color: #c8c5d1;
    font-size: 17.5px;
    font-weight: 500;
}

.powered {
    width: 108px;
    margin-left: 35px;
    white-space: nowrap;
}

.powered-logo {
    padding-top: 5px;
    font-size: 36px;
    font-style: italic;
    line-height: 32px;
}

.powered-logo b {
    font-weight: 900;
    letter-spacing: -1.8px;
}

.powered-logo i {
    font-size: 17.5px;
    font-weight: 800;
}

.powered-by {
    font-size: 15.9px;
    font-weight: 700;
    line-height: 24px;
}

.hero {
    padding-top: 160px;
    text-align: center;
}

.hero-icon {
    width: 100px;
    height: 100px;
    margin: 0 auto;
    display: flex;
    align-items: center;
    justify-content: center;
    border-radius: 50%;
    background: linear-gradient(90deg, #a855f7, #db2777);
}

.hero h1 {
    margin: 40px 0 30px;
    font-size: 90px;
    font-weight: 700;
    line-height: 90px;
}

.hero h1 span {
    color: transparent;
    background: linear-gradient(90deg, #c084fc, #f472b6);
    -webkit-background-clip: text;
    background-clip: text;
}

.hero p {
    margin: 0;
    color: #d1d2db;
    font-size: 30px;
    line-height: 40px;
    white-space: nowrap;
}

.vbar {
    display: flex;
    flex-direction: column;
    align-items: center;
    padding: 10px 0 9px;
}

.vbar .thumb {
    width: 11px;
    height: 73px;
    margin: 9px 0 auto;
    border-radius: 6px;
    background: #8b8b8b;
}

.hbar {
    display: flex;
    align-items: center;
    padding: 0 10px 0 9px;
}

.hbar .thumb {
    width: 1093px;
    height: 11px;
    margin: 0 auto 0 10px;
    border-radius: 6px;
    background: #8b8b8b;
}

.page-scroll {
    width: 19px;
    padding: 10px 0 9px;
    display: flex;
    flex-direction: column;
    align-items: center;
    background: #2c2c2c;
}

.page-scroll .thumb {
    width: 11px;
    height: 37px;
    margin: 703px 0 auto;
    border-radius: 6px;
    background: #9f9f9f;
}

/* Windows taskbar */
.taskbar {
    flex: none;
    height: 60px;
    display: flex;
    align-items: center;
    padding-bottom: 1px;
    border-top: 1px solid #454a54;
    background: linear-gradient(90deg, #33201f 0, #2a2026 130px, #2b2125 300px, #3c1f1b 440px, #34201f 500px, #202431 640px, #1c2231 900px, #1c2230 1800px, #222326 1920px);
    font-family: "Open Sans", sans-serif;
    font-size: 14.5px;
    line-height: 20px;
}

.weather {
    width: 493px;
    padding-left: 24px;
    display: flex;
    align-items: center;
    letter-spacing: -0.3px;
}

.weather-text {
    padding-bottom: 2px;
}

.weather-text span {
    color: #d8d3d2;
}

.weather-icon {
    position: relative;
    width: 40px;
}

.weather .count {
    position: absolute;
    top: -9px;
    left: 14px;
    width: 20px;
    height: 20px;
    border-radius: 50%;
    background: #ff99a4;
    color: #111;
    line-height: 20px;
    text-align: center;
}

.apps {
    display: flex;
}

.task {
    position: relative;
    width: 55px;
    height: 50px;
    display: flex;
    align-items: center;
    justify-content: center;
}

.task .mini {
    position: absolute;
    left: 12px;
    bottom: 10px;
}

.running::after,
.active.task::after {
    content: "";
    position: absolute;
    bottom: 0;
    width: 8px;
    height: 4px;
    border-radius: 2px;
    background: #9a9ca3;
}

.task.active {
    width: 46px;
    margin-left: 4px;
    border: 1px solid #353a48;
    border-radius: 5px;
    background: #2b303e;
    box-shadow: 5px 0 0 -1px #272c39;
}

.active.task .mini {
    left: 7px;
    bottom: 9px;
}

.active.task::after {
    width: 20px;
    background: #4cc2ff;
}

.ys {
    width: 30px;
    height: 30px;
    background: #dd1f26;
    font: 700 25px/31px Roboto, sans-serif;
}

.ys span {
    display: block;
    width: 30px;
    text-align: center;
    transform: scaleX(0.72);
}

.notion-n {
    position: absolute;
    left: 23px;
    top: 16px;
    color: #111;
    font: 700 15px/20px "Liberation Serif", serif;
}

.notion-count {
    position: absolute;
    left: 32px;
    top: 7px;
    width: 16px;
    height: 16px;
    border-radius: 50%;
    background: #e0524c;
    font: 500 11px/16px Inter, sans-serif;
    text-align: center;
}

.tray {
    margin-left: auto;
    padding-right: 25px;
    display: flex;
    align-items: center;
}

.t-kb {
    margin-left: 23px;
}

.t-pad {
    margin-left: 20px;
}

.lang {
    width: 36px;
    margin-left: 19px;
    padding-bottom: 1px;
    text-align: center;
    letter-spacing: -0.4px;
}

.t-wifi {
    margin-left: 20px;
}

.t-vol {
    margin-left: 9px;
}

.t-bat {
    margin-left: 10px;
}

.clock {
    width: 99px;
    padding-bottom: 2px;
    text-align: right;
    letter-spacing: 0.2px;
}

.t-bell {
    margin-left: 11px;
}
```
